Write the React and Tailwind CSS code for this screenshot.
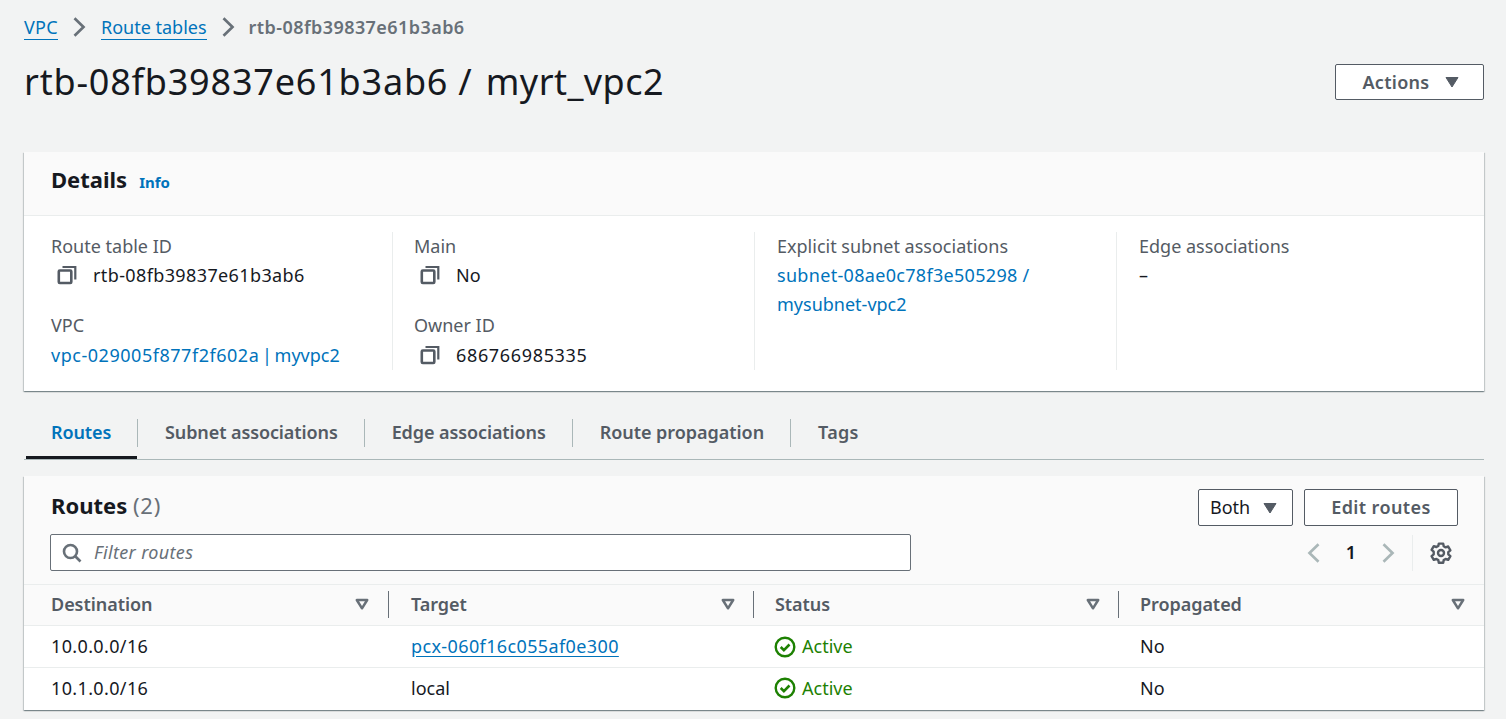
import React from "react";

const Caret = () => (
  <svg width="16" height="16" viewBox="0 0 16 16">
    <path d="M2 3.500h12L8 13z" fill="#545b64" stroke="#545b64" strokeWidth="1" strokeLinejoin="round" />
  </svg>
);
const FilterCaret = () => (
  <svg width="16" height="16" viewBox="0 0 16 16">
    <path d="M2.800 4h10.400L8 12.300z" fill="none" stroke="#687078" strokeWidth="2.500" strokeLinejoin="round" />
  </svg>
);
const Copy = () => (
  <svg width="20" height="20" viewBox="0 0 20 20" fill="none" stroke="#545b64" strokeWidth="2.600">
    <rect x="1.800" y="5.500" width="12.500" height="12.500" rx="1" />
    <path d="M5.500 2h12.800v12.500" strokeWidth="2.200" />
  </svg>
);
const Chevron = ({ dir = "right", color = "#687078" }) => (
  <svg width="20" height="20" viewBox="0 0 20 20" fill="none" stroke={color} strokeWidth="2.700">
    <path d={dir === "right" ? "M5.500 1.200 14.500 10l-9 8.800" : "M14.500 1.200 5.500 10l9 8.800"} />
  </svg>
);
const Check = () => (
  <svg width="22" height="22" viewBox="0 0 22 22" fill="none" stroke="#1d8102" strokeWidth="2.400" className="shrink-0">
    <circle cx="11" cy="11" r="9.300" />
    <path d="M6.700 11l3.200 3.100 5.600-5.600" strokeWidth="2.600" />
  </svg>
);
const Gear = () => (
  <svg width="22" height="22" viewBox="0 0 22 22" fill="none" stroke="#545b64" strokeWidth="2.400" strokeLinejoin="round">
    <path d="M8.800 1.600h4.400l.5 2.700 1.900 1.100 2.600-.9 2.200 3.800-2.100 1.800v2.200l2.100 1.800-2.200 3.800-2.600-.9-1.900 1.100-.5 2.700H8.800l-.5-2.700-1.900-1.100-2.600.9-2.200-3.800 2.100-1.800V9.700L1.600 7.900l2.200-3.800 2.600.9 1.900-1.100z" />
    <circle cx="11" cy="11" r="3" />
  </svg>
);
const Search = () => (
  <svg width="20" height="20" viewBox="0 0 20 20" fill="none" stroke="#687078" strokeWidth="2.600">
    <circle cx="8.500" cy="8.500" r="6.500" />
    <path d="M13 13l5.500 5.500" />
  </svg>
);

const Label = ({ children }) => <div className="text-[18px] leading-[28px] text-[#545b64]">{children}</div>;
const CopyValue = ({ children, tracking = "" }) => (
  <div className="flex items-center h-[30px] pl-[6px] gap-[16px] text-[18px] text-[#16191f]">
    <Copy />
    <span className={tracking}>{children}</span>
  </div>
);
const Tab = ({ children, active, first, tracking = "tracking-[-0.1px]" }) => (
  <div className={`h-[42px] flex items-center ${first ? "w-[111px] pl-[25px]" : "pl-[27px] pr-[26px]"} text-[18px] font-semibold ${tracking} ${active ? "text-[#0073bb]" : "text-[#545b64]"}`}>
    <span>{children}</span>
  </div>
);
const Sep = () => (
  <div className="pt-[8px]">
    <div className="w-px h-[28px] bg-[#aab7b8]" />
  </div>
);
const Th = ({ children, w, last, ml = "ml-[18px]" }) => (
  <div className={`h-[40px] flex items-center justify-between ${w} text-[18px] font-semibold text-[#545b64] tracking-[-0.05px]`}>
    <span>{children}</span>
    <span className="flex items-center">
      <FilterCaret />
      {!last && <span className={`w-px h-[27px] bg-[#687078] ${ml}`} />}
    </span>
  </div>
);
const Row = ({ dest, target, link, last }) => (
  <div className={`flex items-center h-[42px] text-[18px] text-[#16191f] pl-[27px] ${last ? "pb-[2px]" : "border-b border-[#eaeded]"}`}>
    <div className="w-[360px] tracking-[0.36px]">{dest}</div>
    <div className="w-[363px]">
      {link ? <span className="text-[#0073bb] underline underline-offset-[3px] tracking-[0.38px]">{target}</span> : target}
    </div>
    <div className="w-[366px] flex items-center gap-[6px] text-[#1d8102]"><Check /><span>Active</span></div>
    <div>No</div>
  </div>
);

export default function App() {
  return (
    <div className="min-h-[719px] bg-[#f2f3f3] pl-[24px] pr-[22px] pt-[14px] font-['Noto_Sans','Open_Sans',sans-serif] overflow-hidden">
      <div className="flex items-center h-[28px] text-[18px] -mt-[1px]">
        <span className="text-[#0073bb] border-b border-[#0073bb] leading-[24px] tracking-[0.3px]">VPC</span>
        <span className="mx-[11px] flex"><Chevron /></span>
        <span className="text-[#0073bb] border-b border-[#0073bb] leading-[24px] ml-[1px]">Route tables</span>
        <span className="mx-[11px] flex"><Chevron /></span>
        <span className="text-[#687078] font-semibold tracking-[0.43px]">rtb-08fb39837e61b3ab6</span>
      </div>

      <div className="flex items-center justify-between h-[50px] mt-[16px]">
        <h1 className="text-[36px] leading-[46px] text-[#16191f] font-normal tracking-[0.8px]">
          rtb-08fb39837e61b3ab6 / <span className="ml-[3px] tracking-[0.45px]">myrt_vpc2</span>
        </h1>
        <div className="w-[149px] h-[36px] bg-white border border-[#545b64] rounded-[2px] flex items-center justify-center pl-[3px] gap-[14px] text-[18px] font-semibold text-[#545b64] tracking-[0.3px]">
          <span>Actions</span>
          <Caret />
        </div>
      </div>

      <section className="mt-[45px] h-[239px] bg-white shadow-[0_1px_1px_0_rgba(0,28,36,0.3),1px_1px_1px_0_rgba(0,28,36,0.15),-1px_1px_1px_0_rgba(0,28,36,0.15)]">
        <div className="h-[64px] bg-[#fafafa] border-b border-[#eaeded] flex items-center pl-[27px] pb-[8px] gap-[12px]">
          <h2 className="text-[22px] font-bold text-[#16191f]">Details</h2>
          <span className="text-[15px] font-bold text-[#0073bb] mt-[5px]">Info</span>
        </div>
        <div className="flex pl-[27px] pt-[16px]">
          <div className="w-[342px] h-[138px] shrink-0 border-r border-[#eaeded]">
            <Label>Route table ID</Label>
            <CopyValue tracking="tracking-[0.38px]">rtb-08fb39837e61b3ab6</CopyValue>
            <div className="mt-[21px]"><Label>VPC</Label></div>
            <div className="text-[18px] leading-[32px] text-[#0073bb] [word-spacing:-2px]">
              <span className="tracking-[0.53px]">vpc-029005f877f2f602a</span> | myvpc2
            </div>
          </div>
          <div className="pl-[21px] w-[362px] h-[138px] shrink-0 border-r border-[#eaeded]">
            <Label>Main</Label>
            <CopyValue>No</CopyValue>
            <div className="mt-[21px]"><Label>Owner ID</Label></div>
            <div className="pt-[1px]"><CopyValue tracking="tracking-[0.66px]">686766985335</CopyValue></div>
          </div>
          <div className="pl-[22px] w-[362px] h-[138px] shrink-0 border-r border-[#eaeded]">
            <Label>Explicit subnet associations</Label>
            <div className="pt-[1px] text-[18px] leading-[29px] text-[#0073bb]">
              <div className="tracking-[0.31px]">subnet-08ae0c78f3e505298 /</div>
              <div>mysubnet-vpc2</div>
            </div>
          </div>
          <div className="pl-[22px]">
            <Label>Edge associations</Label>
            <div className="pt-[1px] text-[18px] leading-[29px] text-[#16191f]">–</div>
          </div>
        </div>
      </section>

      <div className="mt-[20px] h-[49px] border-b border-[#aab7b8] flex items-start pl-[2px] relative">
        <Tab first active>Routes</Tab>
        <Sep />
        <Tab>Subnet associations</Tab>
        <Sep />
        <Tab>Edge associations</Tab>
        <Sep />
        <Tab tracking="tracking-[-0.04px]">Route propagation</Tab>
        <Sep />
        <Tab tracking="tracking-[0.3px]">Tags</Tab>
        <div className="absolute left-[2px] bottom-0 w-[111px] h-[3px] bg-[#16191f]" />
      </div>

      <section className="mt-[16px] bg-white shadow-[0_1px_1px_0_rgba(0,28,36,0.3),1px_1px_1px_0_rgba(0,28,36,0.15),-1px_1px_1px_0_rgba(0,28,36,0.15)]">
        <div className="h-[109px] bg-[#fafafa] pl-[26px] pr-[26px] border-b border-[#eaeded] flex flex-col">
          <div className="flex items-center justify-between pt-[13px]">
            <h2 className="text-[22px] font-bold text-[#16191f] pl-[1px] -mt-[5px]">Routes <span className="font-normal text-[#687078] tracking-[0.8px]">(2)</span></h2>
            <div className="flex gap-[11px]">
              <div className="w-[95px] h-[37px] bg-white border border-[#545b64] rounded-[2px] flex items-center pl-[11px] gap-[12px] text-[18px] text-[#16191f]">
                <span>Both</span>
                <Caret />
              </div>
              <div className="w-[154px] h-[37px] bg-white border border-[#545b64] rounded-[2px] flex items-center justify-center text-[18px] font-semibold text-[#545b64] tracking-[0.4px]">Edit routes</div>
            </div>
          </div>
          <div className="flex items-center justify-between mt-[8px]">
            <div className="w-[861px] h-[37px] bg-white border border-[#687078] rounded-[2px] flex items-center pl-[11px] gap-[12px] text-[18px] italic text-[#687078] tracking-[0.35px]">
              <Search />
              <span>Filter routes</span>
            </div>
            <div className="flex items-center h-[37px] pr-[6px]">
              <Chevron dir="left" color="#aab7b8" />
              <span className="w-[54px] text-center text-[18px] font-semibold text-[#16191f]">1</span>
              <Chevron color="#aab7b8" />
              <span className="w-px h-[36px] bg-[#eaeded] ml-[14px] mr-[17px]" />
              <Gear />
            </div>
          </div>
        </div>
        <div className="flex items-center h-[41px] bg-[#fafafa] border-b border-[#eaeded] pl-[27px] pb-[2px]">
          <Th w="w-[338px]">Destination</Th>
          <div className="w-[22px]" />
          <Th w="w-[343px]" ml="ml-[17px]">Target</Th>
          <div className="w-[21px]" />
          <Th w="w-[344px]" ml="ml-[17px]">Status</Th>
          <div className="w-[21px]" />
          <Th w="w-[326px]" last>Propagated</Th>
        </div>
        <Row dest="10.0.0.0/16" target="pcx-060f16c055af0e300" link />
        <Row dest="10.1.0.0/16" target="local" last />
      </section>
    </div>
  );
}
